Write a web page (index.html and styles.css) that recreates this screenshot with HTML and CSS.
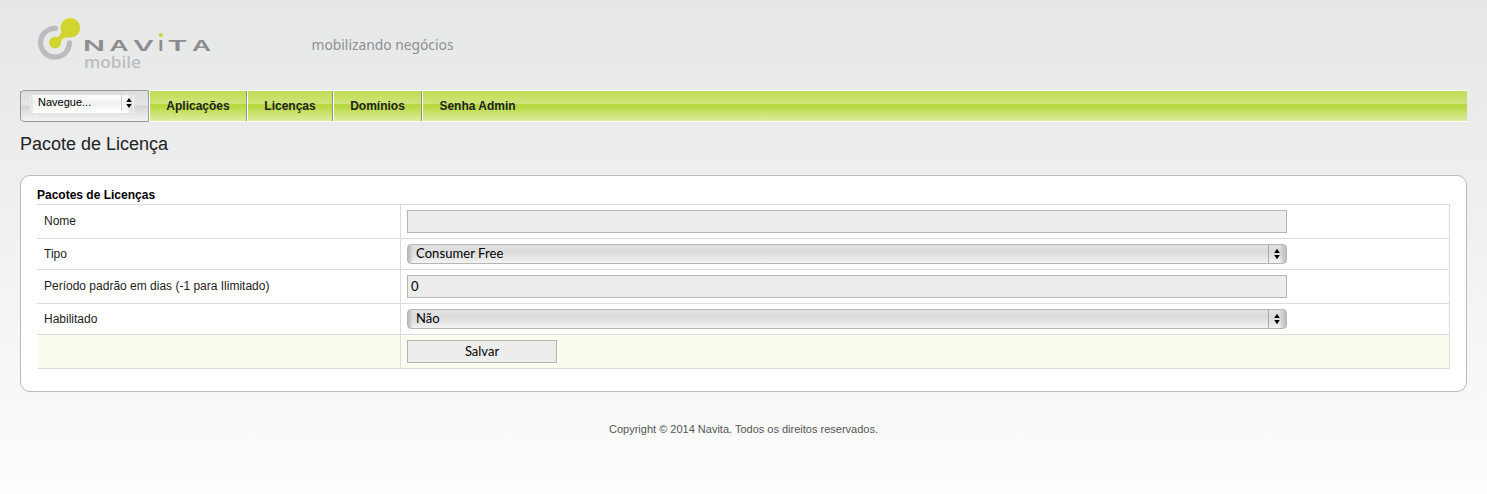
FILE: index.html
```html
<!DOCTYPE html>
<html lang="pt-BR">
<head>
<meta charset="utf-8">
<title>Pacote de Licença</title>
<link rel="stylesheet" href="styles.css">
</head>
<body>
<header class="header">
  <svg class="logo" width="230" height="80" viewBox="0 0 230 80" role="img" aria-label="Navita mobile">
    <path class="logo-ring" d="M55.4 28.3A14.4 14.4 0 1 0 69.4 43"/>
    <path class="logo-lime" d="M60.8 29Q62.5 35.5 56.5 37.2L60.6 43.5Q60.8 37 69 37.2Z"/>
    <circle class="logo-lime" cx="70.3" cy="27.7" r="9.8"/>
    <circle class="logo-lime" cx="55" cy="42.6" r="5.8"/>
    <g class="logo-name">
      <text x="83" y="51" textLength="22" lengthAdjust="spacingAndGlyphs">N</text>
      <text x="109.5" y="51" textLength="19" lengthAdjust="spacingAndGlyphs">A</text>
      <text x="133" y="51" textLength="21" lengthAdjust="spacingAndGlyphs">V</text>
      <text x="158" y="51" textLength="5.6" lengthAdjust="spacingAndGlyphs">I</text>
      <text x="167.5" y="51" textLength="20" lengthAdjust="spacingAndGlyphs">T</text>
      <text x="192" y="51" textLength="19" lengthAdjust="spacingAndGlyphs">A</text>
    </g>
    <circle class="logo-lime" cx="160.8" cy="35" r="2.1"/>
    <text class="logo-sub" x="84" y="67.7" textLength="57" lengthAdjust="spacingAndGlyphs">mobile</text>
  </svg>
  <svg class="slogan" width="150" height="30" viewBox="0 0 150 30"><text x="1.5" y="20" textLength="142" lengthAdjust="spacingAndGlyphs">mobilizando negócios</text></svg>
</header>
<nav class="menu">
  <div class="jump"><div class="jump-select"><span class="jump-label">Navegue...</span><span class="jump-arrows"><svg width="6" height="10" viewBox="0 0 6 10"><path d="M3 0L5.7 4H.3ZM3 10L.3 6H5.7Z"/></svg></span></div></div>
  <a class="tab tab-first">Aplicações</a>
  <a class="tab tab-lic">Licenças</a>
  <a class="tab tab-dom">Domínios</a>
  <a class="tab tab-last">Senha Admin</a>
</nav>
<h1 class="title">Pacote de Licença</h1>
<main class="panel">
  <h2 class="caption">Pacotes de Licenças</h2>
  <div class="grid">
    <div class="row"><div class="label">Nome</div><div class="cell"><div class="input"></div></div></div>
    <div class="row row-select"><div class="label">Tipo</div><div class="cell"><div class="select"><span class="value-long">Consumer Free</span><span class="arrows"><svg width="6" height="12" viewBox="0 0 6 12"><path d="M3 .7L5.8 5H.2ZM3 11.3L.2 7H5.8Z"/></svg></span></div></div></div>
    <div class="row"><div class="label">Período padrão em dias (-1 para Ilimitado)</div><div class="cell"><div class="input">0</div></div></div>
    <div class="row row-select"><div class="label">Habilitado</div><div class="cell"><div class="select"><span>Não</span><span class="arrows"><svg width="6" height="12" viewBox="0 0 6 12"><path d="M3 .7L5.8 5H.2ZM3 11.3L.2 7H5.8Z"/></svg></span></div></div></div>
    <div class="row row-actions"><div class="label"></div><div class="cell"><div class="button">Salvar</div></div></div>
  </div>
</main>
<footer class="footer">Copyright © 2014 Navita. Todos os direitos reservados.</footer>
</body>
</html>
```
FILE: styles.css
```css
* { box-sizing: border-box; }
html { height: 100%; }
body {
  margin: 0;
  height: 494px;
  padding: 0 20px;
  overflow: hidden;
  font: 12px/14px "Liberation Sans", Arial, sans-serif;
  color: #222;
  background: linear-gradient(#e6e8e8 0, #eaecec 100px, #edefee 175px, #f7f8f8 390px, #fdfdfd 494px);
}
.header { display: flex; height: 90px; margin-left: -20px; }
.logo { flex: none; }
.logo-ring { fill: none; stroke: #bcbcc0; stroke-width: 5.3; stroke-linecap: round; }
.logo-lime { fill: #d3d52f; }
.logo-name { font: 600 15px "Inter", sans-serif; fill: #8d8d91; }
.logo-sub { font: 600 17px "Open Sans", sans-serif; fill: #bdbdc1; }
.slogan { margin: 30px 0 0 80px; }
.slogan text { font: 14.5px "Noto Sans", sans-serif; fill: #8e9093; }

.menu {
  display: flex;
  height: 32px;
  border-top: 1px solid #fff;
  border-bottom: 1px solid #fff;
  background: linear-gradient(#c0dc59 0, #c6e063 5px, #cee47c 13px, #b6d73b 13px, #bcdb4b 17px, #deeda1 30px);
}
.jump {
  width: 129px;
  height: 32px;
  margin-top: -1px;
  padding: 4px 0 0 9px;
  border: 1px solid #999;
  border-radius: 4px 0 0 4px;
  background: linear-gradient(#dcdcdc, #e7e7e7 14px, #d5d5d5 15px, #f3f3f3);
}
.jump-select {
  display: flex;
  width: 104px;
  height: 18px;
  background: linear-gradient(90deg, #fff 0, #ddd 1px, #fff0 4px, #fff0 96px, #ddd 102px, #fff 104px), linear-gradient(#fff 0, #f1f1f1 8px, #fff 16px);
}
.jump-label { flex: 1; padding-left: 8px; font-size: 11px; line-height: 15px; color: #000; }
.jump-arrows { display: flex; width: 13px; height: 15px; border-left: 1px solid #ccc; padding: 3px 0 0 4px; }
.tab {
  border-left: 1px solid #fff;
  border-right: 1px solid #8f8f8f;
  text-align: center;
  font-weight: bold;
  line-height: 30px;
  color: #222;
}
.tab-first { width: 98px; }
.tab-lic { width: 86px; }
.tab-dom { width: 89px; }
.tab-last { width: 110px; border-right: 0; }

.title { margin: 11px 0 0; font-size: 18px; font-weight: normal; line-height: 22px; }
.panel {
  height: 217px;
  margin-top: 20px;
  padding: 12px 16px 0;
  border: 1px solid #bbb;
  border-radius: 10px;
  background: #fff;
}
.caption { margin: 0 0 2px; font-size: 12px; line-height: 14px; color: #000; }
.grid { border-top: 1px solid #dcdcdc; border-right: 1px solid #dcdcdc; }
.row { display: flex; height: 34px; border-bottom: 1px solid #dcdcdc; }
.row-select { height: 31px; }
.row-actions { background: #fafcee; border-left: 1px solid #fff; }
.label { width: 363px; padding: 9px 7px 0; }
.row-select .label { padding-top: 8px; }
.row-actions .label { width: 362px; }
.cell { flex: 1; padding: 5px 6px; border-left: 1px solid #dcdcdc; }
.input, .button {
  width: 880px;
  height: 23px;
  padding-left: 3px;
  border: 1px solid #b5b5b5;
  background: #ededed;
  font: 13px/21px "Lato", sans-serif;
  color: #000;
}
.button { width: 150px; padding: 0; text-align: center; }
.select {
  display: flex;
  justify-content: space-between;
  width: 880px;
  height: 20px;
  padding-left: 8px;
  border: 1px solid #b5b5b5;
  border-radius: 4px;
  background: linear-gradient(90deg, #b9b9b9, #d9d9d900 5px, #d9d9d900 871px, #bcbcbc 878px), linear-gradient(#e2e2e2 0, #dcdcdc 6px, #dedede 8px, #e8e8e8 14px, #f4f4f4 18px);
  font: 13px/17px "Lato", sans-serif;
  color: #000;
}
.value-long { letter-spacing: .08px; }
.arrows { display: flex; align-items: center; width: 18px; padding-left: 5px; border-left: 1px solid #aaa; }
.footer { margin-top: 30px; text-align: center; font-size: 11px; line-height: 14px; color: #555; }
```
